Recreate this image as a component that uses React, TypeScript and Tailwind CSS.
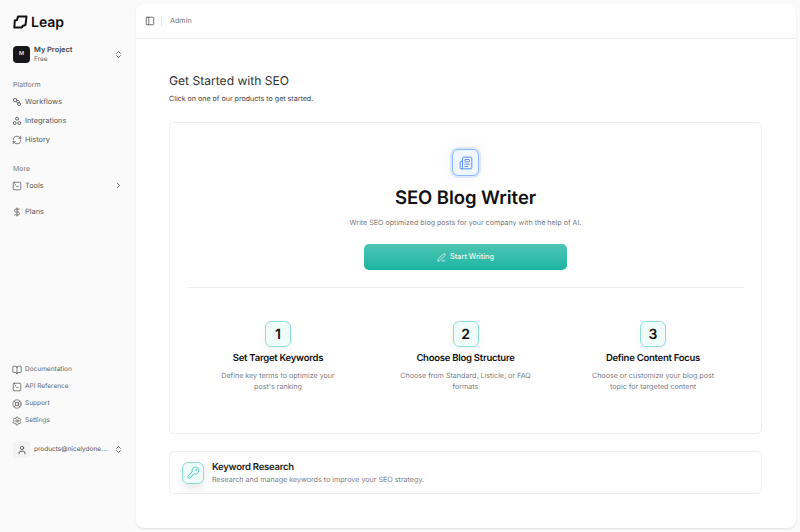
import React from "react";
import {
  BookOpen,
  ChevronRight,
  ChevronsUpDown,
  DollarSign,
  RefreshCw,
  SquareTerminal,
  LifeBuoy,
  Settings,
  User,
  PanelLeft,
  Newspaper,
  PenLine,
  KeyRound,
} from "lucide-react";

const Logo = () => (
  <svg width="15" height="14" viewBox="0 0 15 14" fill="none" stroke="#111" strokeWidth="2" strokeLinejoin="round">
    <path d="M5 1.5 L13.5 1.5 L12.5 10 L9.5 11 L9 12.5 L1.3 12.5 L1.8 5.5 L4 5 Z" />
  </svg>
);

const RouteIcon = ({ size = 10, className }: { size?: number; strokeWidth?: number; className?: string }) => (
  <svg width={size} height={size} viewBox="0 0 24 24" fill="none" stroke="currentColor" strokeWidth="2" className={className}>
    <circle cx="7.5" cy="7.5" r="4" />
    <circle cx="17" cy="17" r="3.5" />
    <path d="M12 8h3a3 3 0 0 1 1 5.5M10.500 11l3 4" />
  </svg>
);

const TripleIcon = ({ size = 10, className }: { size?: number; strokeWidth?: number; className?: string }) => (
  <svg width={size} height={size} viewBox="0 0 24 24" fill="none" stroke="currentColor" strokeWidth="2" className={className}>
    <circle cx="12" cy="6.500" r="3.500" />
    <circle cx="6.500" cy="17" r="3.500" />
    <circle cx="17.500" cy="17" r="3.500" />
  </svg>
);

const NavItem = ({ icon: Icon, label, small }: { icon: any; label: string; small?: boolean }) => (
  <div className={small ? "flex items-center gap-[3px] h-[17px] text-[6.5px] text-[#666]" : "flex items-center gap-[3px] h-[19px] text-[7.4px] text-[#555]"}>
    <Icon size={10} strokeWidth={1.6} className="text-[#444] shrink-0" />
    <span>{label}</span>
  </div>
);

const Step = ({ n, title, text }: { n: number; title: string; text: string }) => (
  <div className="flex flex-col items-center w-[135px]">
    <div className="w-[26px] h-[26px] rounded-[6px] border border-[#8fe0d3] bg-[#f0fcfa] flex items-center justify-center text-[14px] font-semibold text-[#111] shadow-[0_4px_10px_rgba(0,0,0,0.05)]">
      {n}
    </div>
    <div className="mt-[5px] text-[9.5px] leading-[14px] font-semibold tracking-[-0.25px] text-[#111] whitespace-nowrap">{title}</div>
    <div className="mt-[4px] text-[7.15px] leading-[11px] text-[#808088] text-center">{text}</div>
  </div>
);

export default function App() {
  return (
    <div className="w-[800px] h-[532px] overflow-hidden bg-[#fafafa] flex font-['Inter',sans-serif] [text-rendering:geometricPrecision]">
      <aside className="w-[136px] shrink-0 h-full flex flex-col pl-[12px] pr-[13px]">
        <div className="flex items-center gap-[3px] h-[14px] mt-[15px] ml-[1px]">
          <Logo />
          <span className="text-[14px] font-semibold text-[#111]">Leap</span>
        </div>
        <div className="flex items-center mt-[16px] h-[18px] ml-[1px]">
          <div className="w-[17px] h-[17px] rounded-[4px] bg-[#18181b] text-white text-[5.5px] font-medium flex items-center justify-center">M</div>
          <div className="ml-[4px] flex-1">
            <div className="text-[7.4px] leading-[10px] font-semibold text-[#444]">My Project</div>
            <div className="text-[6.5px] leading-[8px] text-[#666]">Free</div>
          </div>
          <ChevronsUpDown size={9} className="text-[#444]" />
        </div>
        <div className="mt-[17px] ml-[1px] text-[7px] leading-[9px] text-[#777]">Platform</div>
        <div className="mt-[3px] flex flex-col">
          <NavItem icon={RouteIcon} label="Workflows" />
          <NavItem icon={TripleIcon} label="Integrations" />
          <NavItem icon={RefreshCw} label="History" />
        </div>
        <div className="mt-[15px] ml-[1px] text-[7px] leading-[9px] text-[#777]">More</div>
        <div className="mt-[3px] flex items-center justify-between h-[19px]">
          <NavItem icon={SquareTerminal} label="Tools" />
          <ChevronRight size={9} className="text-[#444]" />
        </div>
        <div className="mt-[7px]">
          <NavItem icon={DollarSign} label="Plans" />
        </div>
        <div className="mt-auto flex flex-col">
          <NavItem icon={BookOpen} label="Documentation" small />
          <NavItem icon={SquareTerminal} label="API Reference" small />
          <NavItem icon={LifeBuoy} label="Support" small />
          <NavItem icon={Settings} label="Settings" small />
        </div>
        <div className="flex items-center mt-[12px] mb-[74px] h-[17px] ml-[1px]">
          <div className="w-[17px] h-[17px] rounded-[4px] bg-[#f3f3f3] flex items-center justify-center">
            <User size={10} className="text-[#444]" />
          </div>
          <span className="ml-[4px] flex-1 text-[6.5px] text-[#555] whitespace-nowrap">products@nicelydone....</span>
          <ChevronsUpDown size={9} className="text-[#444]" />
        </div>
      </aside>

      <main className="w-[660px] h-[524px] mt-[4px] rounded-[8px] bg-white shadow-[0_1px_2px_rgba(0,0,0,0.1)] flex flex-col">
        <header className="h-[35px] shrink-0 border-b border-[#eeeeee] flex items-center pl-[9px]">
          <PanelLeft size={10} className="text-[#555]" />
          <div className="w-px h-[9px] bg-[#e5e5e5] ml-[6px]" />
          <span className="ml-[8px] text-[7.2px] text-[#777]">Admin</span>
        </header>
        <div className="flex-1 pl-[33px] pr-[34px] pt-[33px]">
          <h1 className="text-[12.1px] leading-[17px] font-normal text-[#333]">Get Started with SEO</h1>
          <p className="mt-[4px] text-[7.1px] leading-[12px] text-[#444]">Click on one of our products to get started.</p>

          <section className="mt-[17px] h-[312px] rounded-[5px] border border-[#efefef] flex flex-col items-center pt-[24px]">
            <div className="w-[31px] h-[31px] rounded-[8px] bg-[#dbe8fe] p-[2px] shadow-[0_0_24px_rgba(0,0,0,0.04)]">
              <div className="w-full h-full rounded-[6px] border border-[#8fb6fb] bg-[#f0f6ff] flex items-center justify-center">
                <Newspaper size={14} strokeWidth={1.6} className="text-[#4f86f0]" />
              </div>
            </div>
            <h2 className="mt-[8px] text-[18.5px] leading-[24px] font-semibold tracking-[-0.05px] text-[#111]">SEO Blog Writer</h2>
            <p className="mt-[7px] text-[7.1px] leading-[11px] text-[#7a7a80]">Write SEO optimized blog posts for your company with the help of AI.</p>
            <button className="mt-[16px] w-[203px] h-[26px] rounded-[5px] bg-gradient-to-b from-[#4cc5b5] to-[#17b5a2] text-white/90 text-[7.3px] font-medium flex items-center justify-center gap-[4px]">
              <PenLine size={9} />
              Start Writing
            </button>
            <div className="mt-[17px] w-[557px] h-px bg-[#eeeeee]" />
            <div className="mt-[33px] w-[510px] flex justify-between">
              <Step n={1} title="Set Target Keywords" text="Define key terms to optimize your post's ranking" />
              <Step n={2} title="Choose Blog Structure" text="Choose from Standard, Listicle, or FAQ formats" />
              <Step n={3} title="Define Content Focus" text="Choose or customize your blog post topic for targeted content" />
            </div>
          </section>

          <section className="mt-[17px] h-[43px] rounded-[5px] border border-[#efefef] flex items-center pl-[12px]">
            <div className="w-[22px] h-[22px] rounded-[6px] border border-[#8fe0d3] bg-[#f0fcfa] flex items-center justify-center shadow-[0_4px_8px_rgba(0,0,0,0.1)]">
              <KeyRound size={13} strokeWidth={1.5} className="text-[#2bbfae]" />
            </div>
            <div className="ml-[8px] pt-[1px]">
              <div className="text-[9.5px] leading-[13px] font-semibold tracking-[-0.25px] text-[#222]">Keyword Research</div>
              <div className="text-[7.15px] leading-[12px] text-[#808088]">Research and manage keywords to improve your SEO strategy.</div>
            </div>
          </section>
        </div>
      </main>
    </div>
  );
}
